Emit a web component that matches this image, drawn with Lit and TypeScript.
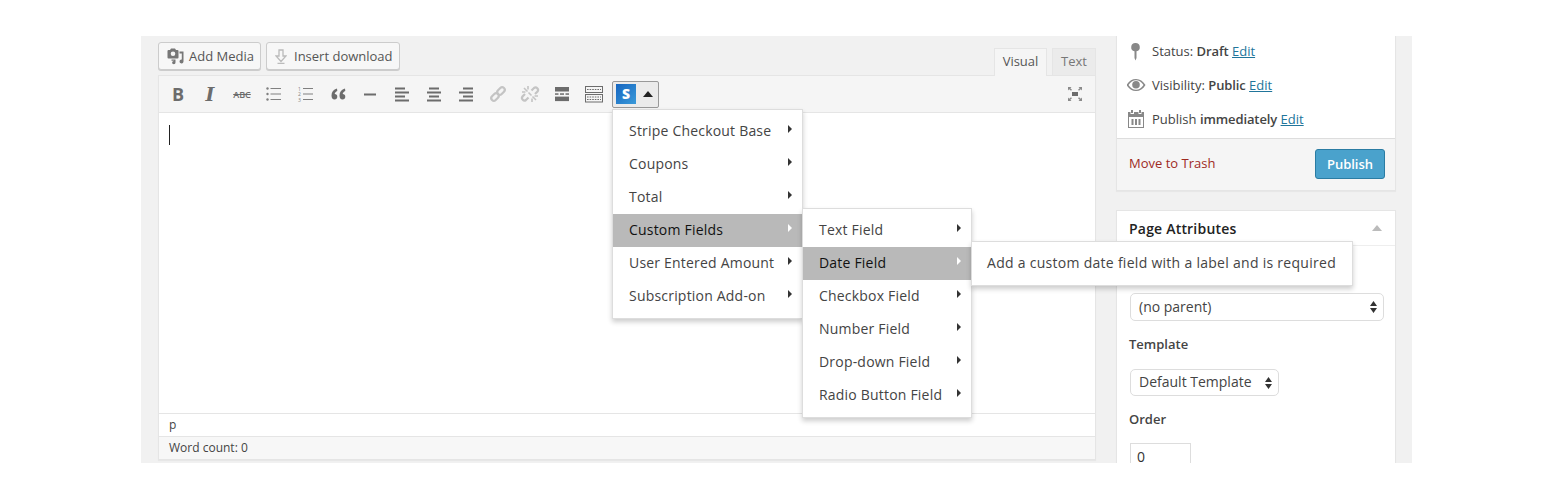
import { LitElement, css, html, svg } from "lit";
import { customElement } from "lit/decorators.js";

const rows = (ys: number[], x1: number, x2: number) =>
  ys.map((y) => svg`<rect x=${x1} y=${y} width=${x2 - x1} height="1"></rect>`);

const ICONS: Record<string, unknown> = {
  ul: svg`<circle cx="1.500" cy="2.500" r="1.200"></circle><circle cx="1.500" cy="8" r="1.200"></circle><circle cx="1.500" cy="13.500" r="1.200"></circle>${rows([2, 7.5, 13], 4.5, 15)}`,
  ol: svg`<text x="0" y="4.500" class="tiny">1</text><text x="0" y="10" class="tiny">2</text><text x="0" y="15.500" class="tiny">3</text>${rows([2, 7.5, 13], 5, 15)}`,
  quote: svg`<path d="M7 2.500C3.500 3.500 1.500 6 1.500 9.500c0 2.500 1.200 4 3 4s2.800-1.200 2.800-2.800-1-2.700-2.600-2.700c.3-1.300 1.200-2.300 2.600-3zM15 2.500c-3.500 1-5.500 3.500-5.500 7 0 2.500 1.200 4 3 4s2.800-1.200 2.800-2.800-1-2.700-2.600-2.700c.3-1.300 1.200-2.300 2.600-3z"></path>`,
  hr: svg`<rect x="2" y="7.500" width="12" height="2"></rect>`,
  left: svg`<rect x="1" y="1.500" width="10" height="2"></rect><rect x="1" y="5.500" width="14" height="2"></rect><rect x="1" y="9.500" width="10" height="2"></rect><rect x="1" y="13.500" width="14" height="2"></rect>`,
  center: svg`<rect x="3" y="1.500" width="10" height="2"></rect><rect x="1" y="5.500" width="14" height="2"></rect><rect x="3" y="9.500" width="10" height="2"></rect><rect x="1" y="13.500" width="14" height="2"></rect>`,
  right: svg`<rect x="5" y="1.500" width="10" height="2"></rect><rect x="1" y="5.500" width="14" height="2"></rect><rect x="5" y="9.500" width="10" height="2"></rect><rect x="1" y="13.500" width="14" height="2"></rect>`,
  link: svg`<g fill="none" stroke-width="2.200"><rect x="-4.200" y="-2.600" width="8.400" height="5.200" rx="2.600" transform="translate(5 11) rotate(-45)"></rect><rect x="-4.200" y="-2.600" width="8.400" height="5.200" rx="2.600" transform="translate(11 5) rotate(-45)"></rect></g>`,
  unlink: svg`<g fill="none" stroke-width="2.200"><path d="M9.500 4.500 12 2a2.500 2.500 0 0 1 3.500 3.500L13 8"></path><path d="M6.500 11.500 4 14a2.500 2.500 0 0 1-3.500-3.500L3 8"></path></g><g fill="none" stroke-width="1.600"><path d="M6 0v3.500M0 6h3.500M2 2l3.500 3.500M10 16v-3.500M16 10h-3.500M14 14l-3.500-3.500M6.500 6.500l3 3"></path></g>`,
  more: svg`<rect x="1" y="1" width="14" height="4.500"></rect><rect x="1" y="7.300" width="3.500" height="1.500"></rect><rect x="6" y="7.300" width="4" height="1.500"></rect><rect x="11.500" y="7.300" width="3.500" height="1.500"></rect><rect x="1" y="10.600" width="14" height="4.500"></rect>`,
  kbd: svg`<g fill="none" stroke-width="1"><rect x="-0.500" y="0.500" width="17" height="6"></rect><rect x="-0.500" y="8.500" width="17" height="7.500"></rect><path d="M1 3.500h14M1 11h14M1 13.500h14" stroke-dasharray="1.600 1"></path></g>`,
  full: svg`<rect x="5" y="6" width="6" height="4"></rect><path d="M1 1h3.500L3.300 2.200 5 3.800 4 4.800 2.200 3.200 1 4.500zM15 1h-3.500l1.200 1.200L11 3.800l1 1 1.800-1.600L15 4.500zM1 15v-3.500l1.200 1.300L4 11.200l1 1-1.700 1.600L4.500 15zM15 15h-3.500l1.200-1.200L11 12.200l1-1 1.800 1.600 1.200-1.300z" class="soft"></path>`,
};

const TOOLBAR = ["B", "I", "ABC", "ul", "ol", "quote", "hr", "left", "center", "right", "link", "unlink", "more", "kbd"];

const MENU_ONE = ["Stripe Checkout Base", "Coupons", "Total", "Custom Fields", "User Entered Amount", "Subscription Add-on"];
const MENU_TWO = ["Text Field", "Date Field", "Checkbox Field", "Number Field", "Drop-down Field", "Radio Button Field"];

@customElement("app-root")
export class AppRoot extends LitElement {
  static styles = css`
    :host {
      display: block;
      height: 500px;
      box-sizing: border-box;
      padding-top: 36px;
      background: #fff;
      font-family: "Open Sans", sans-serif;
      color: #444;
    }

    .panel {
      position: relative;
      display: flex;
      gap: 20px;
      width: 1254px;
      height: 427px;
      margin-left: 141px;
      padding-left: 17px;
      background: #f1f1f1;
      overflow: hidden;
    }

    .main {
      width: 938px;
      flex: none;
      display: flex;
      flex-direction: column;
    }

    .top {
      display: flex;
      height: 39px;
      padding-top: 6px;
      box-sizing: border-box;
    }

    .btn {
      height: 28px;
      box-sizing: border-box;
      display: flex;
      align-items: center;
      margin-right: 5px;
      border: 1px solid #ccc;
      border-radius: 3px;
      background: #f7f7f7;
      box-shadow: 0 1px 0 #ccc;
      font-size: 13px;
      color: #555;
    }

    .btn.media {
      width: 103px;
      padding-left: 8px;
      gap: 5px;
    }

    .btn.download {
      width: 134px;
      padding-left: 8px;
      gap: 7px;
    }

    .tabs {
      margin-left: auto;
      display: flex;
      align-items: flex-end;
      gap: 5px;
      margin-bottom: -1px;
      z-index: 1;
    }

    .tab {
      width: 53px;
      height: 28px;
      box-sizing: border-box;
      border: 1px solid #e5e5e5;
      border-bottom: none;
      background: #f5f5f5;
      font-size: 13px;
      line-height: 25px;
      text-align: center;
      color: #555;
    }

    .tab.off {
      width: 44px;
      background: #ebebeb;
      color: #777;
      border-bottom: 1px solid #e5e5e5;
    }

    .editor {
      height: 385px;
      box-sizing: border-box;
      border: 1px solid #e5e5e5;
      border-top: none;
      background: #fff;
      display: flex;
      flex-direction: column;
      box-shadow: 0 1px 1px rgba(0, 0, 0, 0.04);
    }

    .toolbar {
      height: 38px;
      flex: none;
      box-sizing: border-box;
      border-top: 1px solid #e5e5e5;
      border-bottom: 1px solid #e5e5e5;
      background: #f5f5f5;
      display: flex;
      align-items: center;
      padding-left: 3px;
    }

    .tool {
      width: 32px;
      height: 28px;
      display: flex;
      align-items: center;
      justify-content: center;
      color: #6c6c6c;
      flex: none;
    }

    .tool svg {
      width: 16px;
      height: 16px;
      fill: #6c6c6c;
      stroke: #6c6c6c;
      stroke-width: 0;
      overflow: visible;
    }

    .tool.off svg {
      fill: #c4c4c4;
      stroke: #c4c4c4;
    }

    .tool.thin svg {
      fill: #808080;
    }

    .tool svg .tiny {
      font-size: 5px;
      stroke: none;
    }

    .tool.bold {
      font-size: 18px;
      font-weight: 700;
    }

    .tool.ital {
      font-family: "DejaVu Serif", serif;
      font-size: 19px;
      font-weight: 700;
      font-style: italic;
    }

    .tool.strike {
      font-size: 9px;
      font-weight: 600;
      text-decoration: line-through;
    }

    .plugin {
      margin-left: 2px;
      width: 47px;
      height: 27px;
      box-sizing: border-box;
      border: 1px solid #999;
      border-radius: 2px;
      background: #ebebeb;
      display: flex;
      align-items: center;
      padding-left: 3px;
    }

    .logo {
      width: 20px;
      height: 20px;
      background: linear-gradient(135deg, #1565c0, #3a9ad9);
      color: #fff;
      font-size: 14px;
      font-weight: 800;
      line-height: 20px;
      text-align: center;
    }

    .drop {
      border-left: 5px solid transparent;
      border-right: 5px solid transparent;
      border-bottom: 6px solid #222;
      margin-left: 7px;
    }

    .tool.full {
      margin-left: auto;
      margin-right: 4px;
    }

    .tool.full .soft {
      fill: #8a8a8a;
    }

    .body {
      flex: 1;
      padding: 12px 10px;
    }

    .caret {
      width: 1px;
      height: 20px;
      background: #222;
    }

    .path,
    .count {
      height: 23px;
      box-sizing: border-box;
      border-top: 1px solid #e5e5e5;
      padding-left: 10px;
      font-size: 12px;
      line-height: 22px;
      color: #444;
    }

    .count {
      background: #f7f7f7;
    }

    .side {
      width: 280px;
      flex: none;
      display: flex;
      flex-direction: column;
      gap: 19px;
      margin-top: -2px;
    }

    .box {
      box-sizing: border-box;
      border: 1px solid #e5e5e5;
      border-top: none;
      background: #fff;
      box-shadow: 0 1px 1px rgba(0, 0, 0, 0.04);
      font-size: 13px;
      color: #444;
    }

    .misc {
      height: 104px;
      box-sizing: border-box;
    }

    .misc-row {
      height: 34px;
      display: flex;
      align-items: center;
      padding-left: 10px;
    }

    .misc-row svg {
      width: 20px;
      height: 20px;
      fill: #888;
      margin-right: 5px;
      flex: none;
    }

    .misc-row b {
      font-weight: 600;
      letter-spacing: -0.1px;
      margin: 0 3.4px;
    }

    a {
      color: #21759b;
      text-decoration: underline;
    }

    .actions {
      height: 52px;
      box-sizing: border-box;
      border-top: 1px solid #ddd;
      background: #f5f5f5;
      display: flex;
      align-items: center;
      justify-content: space-between;
      padding: 0 10px 0 12px;
      color: #9e2a1f;
    }

    .actions span {
      margin-bottom: 3px;
    }

    .publish {
      width: 70px;
      height: 30px;
      box-sizing: border-box;
      border: 1px solid #2a7ca3;
      border-radius: 3px;
      background: #4aa2cc;
      color: #fff;
      font-size: 13px;
      font-weight: 600;
      line-height: 28px;
      text-align: center;
      margin-bottom: 2px;
    }

    .attrs {
      border-top: 1px solid #e5e5e5;
      height: 300px;
    }

    .attrs-head {
      height: 35px;
      box-sizing: border-box;
      border-bottom: 1px solid #eee;
      display: flex;
      align-items: center;
      justify-content: space-between;
      padding: 0 13px 0 12px;
      font-size: 14px;
      font-weight: 600;
      letter-spacing: 0.2px;
      color: #222;
    }

    .attrs-head i {
      border-left: 5px solid transparent;
      border-right: 5px solid transparent;
      border-bottom: 6px solid #bbb;
    }

    .attrs-body {
      padding: 47px 11px 0 13px;
      display: flex;
      flex-direction: column;
      align-items: flex-start;
    }

    .label {
      font-size: 13px;
      font-weight: 600;
      color: #444;
      line-height: 18px;
      margin-left: -1px;
    }

    .select {
      height: 28px;
      box-sizing: border-box;
      border: 1px solid #ddd;
      border-radius: 5px;
      background: #fff;
      display: flex;
      align-items: center;
      justify-content: space-between;
      padding: 0 6px 0 8px;
      font-size: 14px;
      color: #444;
    }

    .select span {
      margin-bottom: 2px;
    }

    .select.wide {
      width: 254px;
    }

    .select.small {
      width: 149px;
      height: 27px;
    }

    .select svg {
      width: 7px;
      height: 12px;
      fill: #333;
    }

    .tpl-label {
      margin-top: 14px;
      margin-bottom: 16px;
    }

    .order-label {
      margin-top: 14px;
      margin-bottom: 15px;
    }

    input {
      width: 61px;
      height: 28px;
      box-sizing: border-box;
      border: 1px solid #ddd;
      padding: 0 0 2px 6px;
      font: 14px "Open Sans", sans-serif;
      color: #333;
    }

    .menu {
      position: absolute;
      box-sizing: border-box;
      background: #fff;
      border: 1px solid #ddd;
      padding: 5px 0;
      box-shadow: 0 3px 5px rgba(0, 0, 0, 0.2);
      font-size: 14px;
      color: #444;
      letter-spacing: 0.2px;
    }

    .menu.one {
      left: 471px;
      top: 73px;
      width: 191px;
      height: 210px;
    }

    .menu.two {
      left: 661px;
      top: 172px;
      width: 170px;
      height: 210px;
      z-index: 1;
    }

    .item {
      height: 33px;
      display: flex;
      align-items: center;
      justify-content: space-between;
      padding: 0 10px 0 16px;
    }

    .item span {
      margin-bottom: 2px;
    }

    .item i {
      border-top: 4px solid transparent;
      border-bottom: 4px solid transparent;
      border-left: 4px solid #333;
      margin-top: -5px;
    }

    .item.on {
      background: #b9b9b9;
      color: #111;
    }

    .item.on i {
      border-left-color: #fff;
    }

    .tip {
      position: absolute;
      left: 830px;
      top: 205px;
      width: 382px;
      height: 45px;
      box-sizing: border-box;
      background: #fff;
      border: 1px solid #ddd;
      box-shadow: 0 3px 5px rgba(0, 0, 0, 0.2);
      padding-left: 15px;
      font-size: 14px;
      line-height: 42px;
      color: #444;
      letter-spacing: 0.28px;
      z-index: 2;
    }
  `;

  renderTool(name: string) {
    if (name === "B") return html`<div class="tool bold">B</div>`;
    if (name === "I") return html`<div class="tool ital">I</div>`;
    if (name === "ABC") return html`<div class="tool strike">ABC</div>`;
    const cls = name === "link" || name === "unlink" ? "off" : name === "ul" || name === "ol" ? "thin" : name;
    return html`<div class="tool ${cls}"><svg viewBox="0 0 16 16">${ICONS[name]}</svg></div>`;
  }

  renderMenu(cls: string, items: string[], active: string) {
    return html`<div class="menu ${cls}">
      ${items.map(
        (t) => html`<div class="item ${t === active ? "on" : ""}"><span>${t}</span><i></i></div>`
      )}
    </div>`;
  }

  render() {
    const updown = svg`<path d="M3.500 0 7 5H0zM3.500 12 0 7h7z"></path>`;
    return html`
      <div class="panel">
        <div class="main">
          <div class="top">
            <div class="btn media">
              <svg width="17" height="17" viewBox="0 0 17 17" fill="#777">
                <path fill-rule="evenodd" d="M1.500 2H3l1-1.500h4L9 2h1.500a1 1 0 0 1 1 1v6.500a1 1 0 0 1-1 1h-9a1 1 0 0 1-1-1V3a1 1 0 0 1 1-1zM6 3.500a2.300 2.300 0 1 0 0 4.600 2.300 2.300 0 0 0 0-4.600z"></path>
                <path d="M12.500 3.500h4v10a2 2 0 1 1-1.700-2V5.500h-2.300zM4.500 11.500h4v3a1.700 1.700 0 1 1-1.500-1.600v-.2H4.500z"></path>
              </svg>
              Add Media
            </div>
            <div class="btn download">
              <svg width="12" height="15" viewBox="0 0 12 15" fill="none" stroke="#bbb" stroke-width="1.300">
                <path d="M4 1h4v6h3l-5 5.500L1 7h3zM2.500 14.300h7"></path>
              </svg>
              Insert download
            </div>
            <div class="tabs">
              <div class="tab">Visual</div>
              <div class="tab off">Text</div>
            </div>
          </div>
          <div class="editor">
            <div class="toolbar">
              ${TOOLBAR.map((t) => this.renderTool(t))}
              <div class="plugin"><div class="logo">S</div><div class="drop"></div></div>
              <div class="tool full"><svg viewBox="0 0 16 16">${ICONS.full}</svg></div>
            </div>
            <div class="body"><div class="caret"></div></div>
            <div class="path">p</div>
            <div class="count">Word count: 0</div>
          </div>
        </div>
        <div class="side">
          <div class="box">
            <div class="misc">
              <div class="misc-row">
                <svg viewBox="1.500 -2 20 20"><path d="M10 0a4.200 4.200 0 0 1 1 8.300V15l-1 2.500L9 15V8.300A4.200 4.200 0 0 1 10 0z"></path></svg>
                <span>Status:</span><b>Draft</b><a>Edit</a>
              </div>
              <div class="misc-row">
                <svg viewBox="1 0 20 20">
                  <path fill-rule="evenodd" d="M.5 10C3 6 6 4 10 4s7 2 9.500 6c-2.500 4-5.500 6-9.500 6S3 14 .5 10zM2.500 10c2 3 4.500 4.800 7.500 4.800s5.500-1.800 7.500-4.800c-2-3-4.500-4.800-7.500-4.800S4.500 7 2.500 10z"></path>
                  <circle cx="10" cy="9.700" r="3.800"></circle>
                </svg>
                <span>Visibility:</span><b>Public</b><a>Edit</a>
              </div>
              <div class="misc-row">
                <svg viewBox="1 0 20 20"><path fill-rule="evenodd" d="M5 1h2v3H5zM13 1h2v3h-2zM2 3h2.500v2H8V3h4.500v2h3V3H18v16H2zm1 5v10h14V8zm2.500 2h2v6h-2zm3.500 0h2v6H9zm3.500 0h2v6h-2z"></path></svg>
                <span>Publish</span><b>immediately</b><a>Edit</a>
              </div>
            </div>
            <div class="actions">
              <span>Move to Trash</span>
              <div class="publish">Publish</div>
            </div>
          </div>
          <div class="box attrs">
            <div class="attrs-head"><span>Page Attributes</span><i></i></div>
            <div class="attrs-body">
              <div class="select wide"><span>(no parent)</span><svg viewBox="0 0 7 12">${updown}</svg></div>
              <div class="label tpl-label">Template</div>
              <div class="select small"><span>Default Template</span><svg viewBox="0 0 7 12">${updown}</svg></div>
              <div class="label order-label">Order</div>
              <input value="0" />
            </div>
          </div>
        </div>
        ${this.renderMenu("one", MENU_ONE, "Custom Fields")}
        ${this.renderMenu("two", MENU_TWO, "Date Field")}
        <div class="tip">Add a custom date field with a label and is required</div>
      </div>
    `;
  }
}
